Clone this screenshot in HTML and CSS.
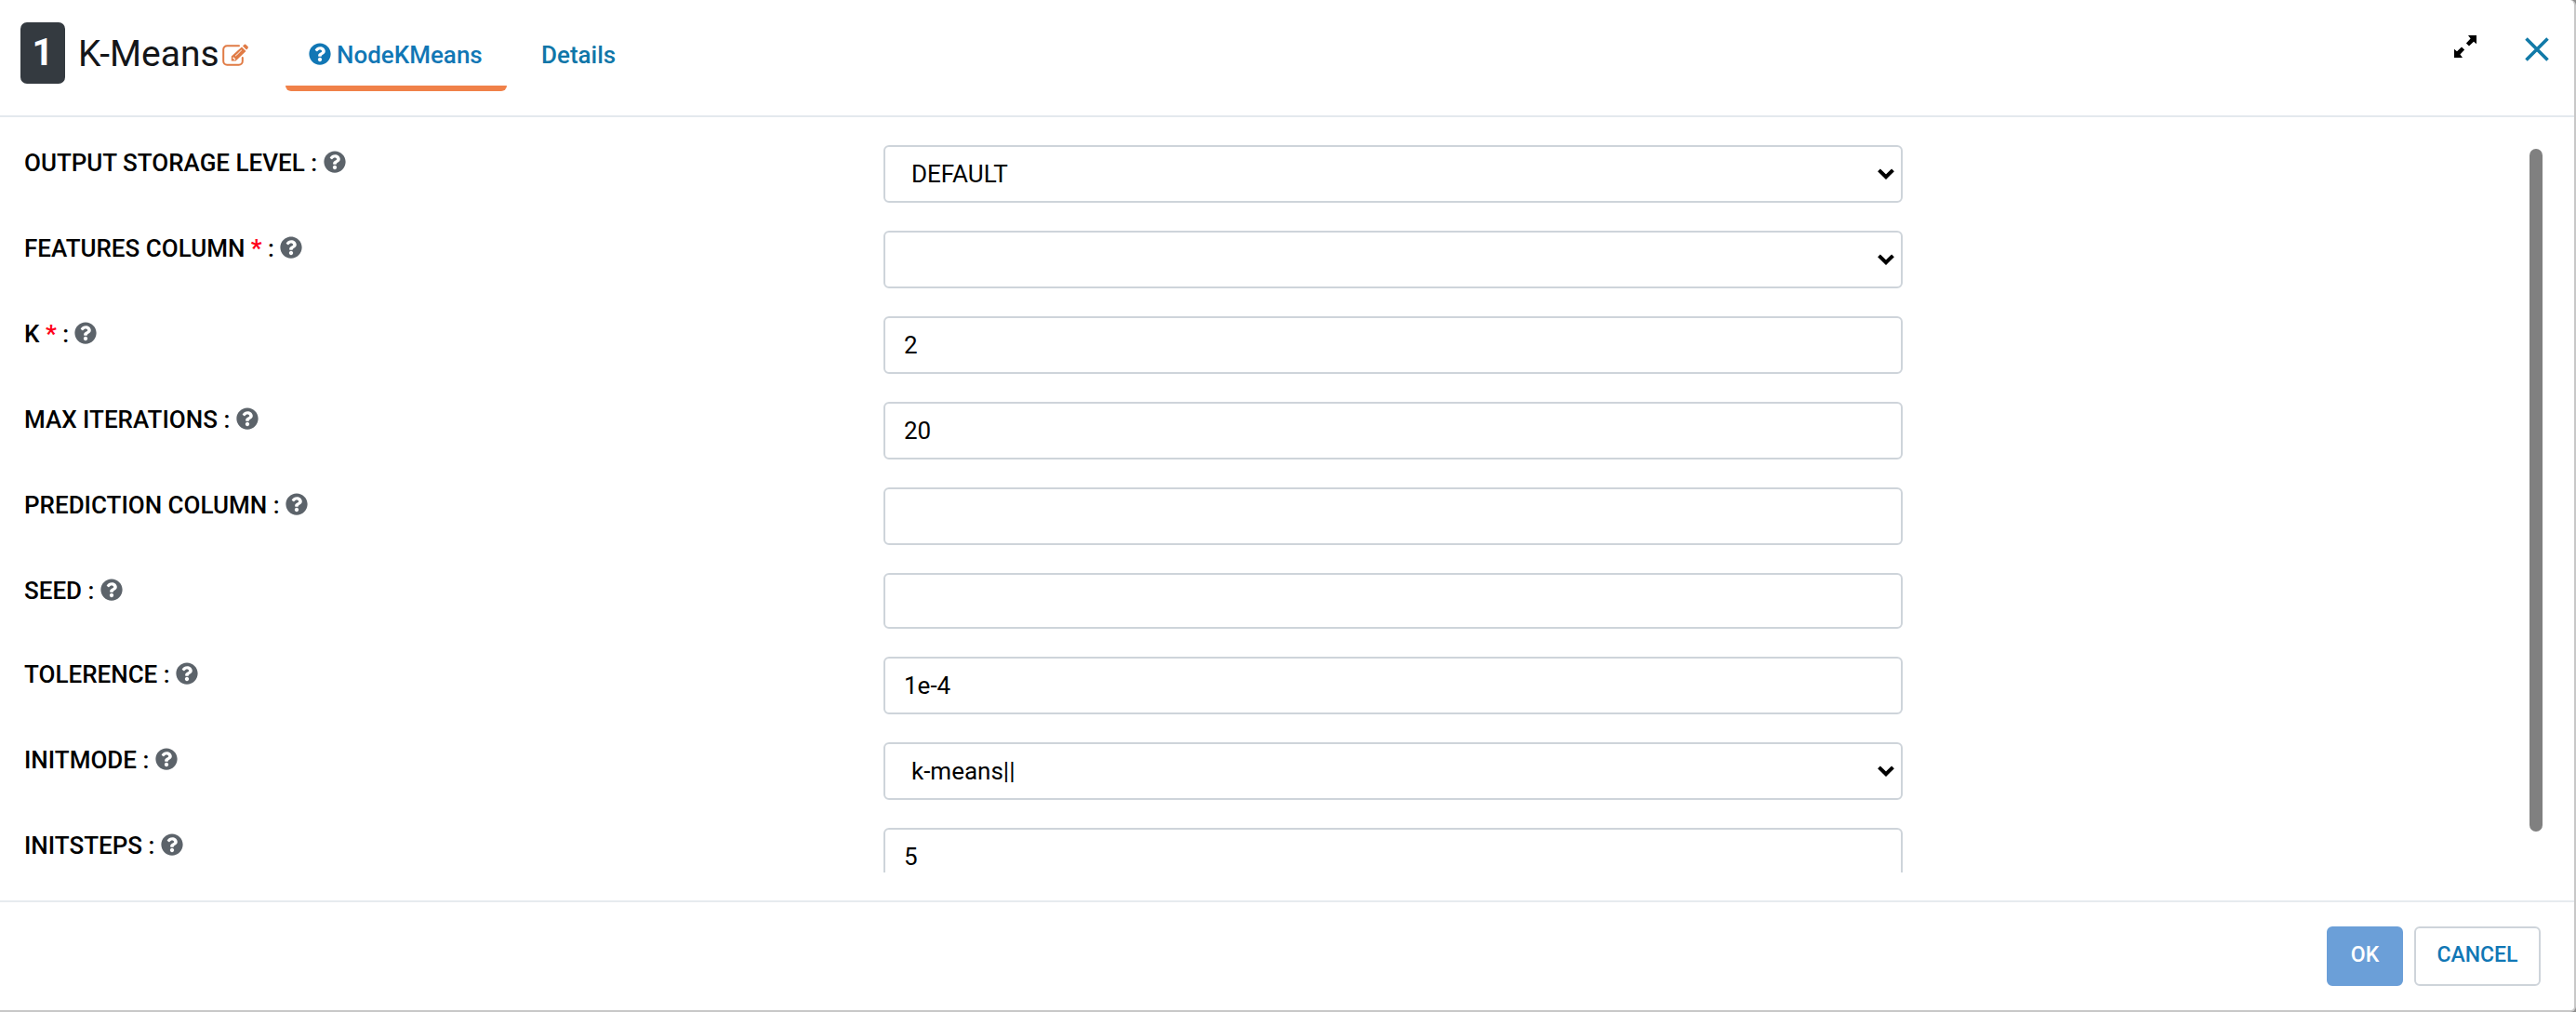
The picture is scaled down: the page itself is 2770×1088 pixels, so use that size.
FILE: index.html
```html
<!DOCTYPE html>
<html lang="en">
<head>
<meta charset="utf-8">
<title>K-Means</title>
<link rel="stylesheet" href="styles.css">
</head>
<body>
<svg class="sprite" aria-hidden="true">
  <symbol id="help" viewBox="0 0 512 512"><path fill="currentColor" d="M504 256c0 137-111 248-248 248S8 393 8 256 119 8 256 8s248 111 248 248zM262.700 90c-54.500 0-89.300 23-116.500 63.800-3.500 5.300-2.400 12.400 2.700 16.300l34.700 26.300c5.200 3.900 12.600 3 16.700-2.100 17.900-22.700 30.100-35.800 57.300-35.800 20.400 0 45.700 13.100 45.700 33 0 15-12.400 22.700-32.500 34C247.100 238.500 216 254.900 216 296v4c0 6.600 5.400 12 12 12h56c6.600 0 12-5.400 12-12v-1.300c0-28.500 83.200-29.600 83.200-106.700 0-58-60.200-102-116.500-102zM256 338c-25.400 0-46 20.600-46 46s20.600 46 46 46 46-20.600 46-46-20.600-46-46-46z"/></symbol>
</svg>
<div class="dialog">
  <header class="header">
    <span class="badge">1</span>
    <h1 class="title">K-Means</h1>
    <svg class="edit" viewBox="0 0 28 24"><path d="M18 2.200H5.200a4 4 0 0 0-4 4v12.600a4 4 0 0 0 4 4h12.600a4 4 0 0 0 4-4V15" fill="none" stroke="currentColor" stroke-width="2" stroke-linecap="round"/><path fill="currentColor" fill-rule="evenodd" d="M21 3.500l4.500 4.500L14.500 18.500H9.800v-5zM12 14.300l-.6.700v1.200h1.300v1.200h1l.7-.7zM20.500 6.500l-6.600 6.600.5.500L21 7zM22 2.500l1.300-1.300a1.700 1.700 0 0 1 2.400 0l1.600 1.600a1.700 1.700 0 0 1 0 2.400L26 6.500z"/></svg>
    <nav class="tabs">
      <a class="tab active"><svg class="help"><use href="#help"/></svg><span>NodeKMeans</span></a>
      <a class="tab">Details</a>
    </nav>
    <div class="tools">
      <svg class="expand" viewBox="0 0 24 24"><path d="M15 0H24V9.200L21 6.800L16 11.600L12.900 8.500L17.600 3.400Z"/><path d="M15 0H24V9.200L21 6.800L16 11.600L12.900 8.500L17.600 3.400Z" transform="rotate(180 12 12)"/></svg>
      <svg class="close" viewBox="0 0 26 26"><path d="M1.500 1.500l23 23M24.500 1.500l-23 23"/></svg>
    </div>
  </header>
  <main class="body">
    <div class="form">
      <div class="row"><label>OUTPUT STORAGE LEVEL : <svg class="help"><use href="#help"/></svg></label><div class="field select">DEFAULT<svg class="chev" viewBox="0 0 18 12"><path d="M1.500 1.800L9 9.200l7.500-7.400"/></svg></div></div>
      <div class="row"><label>FEATURES COLUMN <b>*</b> : <svg class="help"><use href="#help"/></svg></label><div class="field select"><svg class="chev" viewBox="0 0 18 12"><path d="M1.500 1.800L9 9.200l7.500-7.400"/></svg></div></div>
      <div class="row"><label>K <b>*</b> : <svg class="help"><use href="#help"/></svg></label><div class="field">2</div></div>
      <div class="row"><label>MAX ITERATIONS : <svg class="help"><use href="#help"/></svg></label><div class="field">20</div></div>
      <div class="row"><label>PREDICTION COLUMN : <svg class="help"><use href="#help"/></svg></label><div class="field"></div></div>
      <div class="row short"><label>SEED : <svg class="help"><use href="#help"/></svg></label><div class="field"></div></div>
      <div class="row"><label>TOLERENCE : <svg class="help"><use href="#help"/></svg></label><div class="field">1e-4</div></div>
      <div class="row"><label>INITMODE : <svg class="help"><use href="#help"/></svg></label><div class="field select">k-means||<svg class="chev" viewBox="0 0 18 12"><path d="M1.500 1.800L9 9.200l7.500-7.400"/></svg></div></div>
      <div class="row"><label>INITSTEPS : <svg class="help"><use href="#help"/></svg></label><div class="field">5</div></div>
    </div>
    <div class="scrollbar"></div>
  </main>
  <footer class="footer">
    <button class="btn primary">OK</button>
    <button class="btn">CANCEL</button>
  </footer>
</div>
</body>
</html>
```
FILE: styles.css
```css
* { box-sizing: border-box; }
body { margin: 0; background: #8c8c8c; font-family: Roboto, "Liberation Sans", sans-serif; font-size: 26px; color: #000; }
svg { display: block; flex: none; }
.sprite { width: 0; height: 0; position: absolute; }
.dialog { width: 2770px; height: 1088px; background: #fff; border: solid #c8c8c8; border-width: 0 2px 2px 0; border-radius: 0 6px 6px 0; display: flex; flex-direction: column; overflow: hidden; }
.header { height: 126px; flex: none; border-bottom: 2px solid #e4e9ee; display: flex; align-items: flex-start; padding: 24px 27px 0 22px; }
.badge { width: 48px; height: 66px; border-radius: 7px; background: #343a40; color: #fff; font-size: 40px; font-weight: 700; line-height: 66px; text-align: center; }
.title { margin: 0 0 0 14px; width: 153px; font-size: 39px; font-weight: 400; line-height: 68px; color: #141619; white-space: nowrap; }
.edit { width: 28px; height: 24px; margin: 23px 0 0 2px; color: #e07b45; }
.tabs { display: flex; margin-left: 40px; }
.tab { height: 74px; padding: 0 26px; line-height: 70px; font-weight: 500; color: #0f76a8; display: flex; border-bottom: 6px solid transparent; margin-right: 11px; }
.tab.active { width: 238px; padding-left: 25px; color: #1177b5; border-bottom-color: #f08149; border-radius: 0 0 6px 6px; }
.tab .help { margin: 22px 6px 0 0; color: #1177b5; }
.help { width: 24px; height: 24px; color: #5c636a; }
.tools { margin-left: auto; display: flex; }
.expand { width: 24px; height: 24px; margin-top: 14px; }
.close { width: 26px; height: 26px; margin: 16px 0 0 52px; stroke: #117aa8; stroke-width: 3.600; }
.body { height: 844px; flex: none; border-bottom: 2px solid #e7ebef; display: flex; justify-content: space-between; padding: 30px 34px 0 26px; }
.form { height: 782px; overflow: hidden; }
.row { display: grid; grid-template-columns: 924px 1096px; height: 92px; }
.row.short { height: 90px; }
.row label { display: flex; height: 39px; line-height: 39px; font-weight: 500; white-space: pre; }
.row label .help { margin-top: 6px; }
.row b { color: #ff0019; font-weight: 700; }
.field { height: 62px; border: 2px solid #ced4da; border-radius: 6px; padding: 0 20px; line-height: 58px; display: flex; justify-content: space-between; }
.short .field { height: 60px; }
.select { padding: 0 7px 0 28px; }
.chev { width: 18px; height: 12px; margin: 23px 0 0 auto; fill: none; stroke: #000; stroke-width: 4; }
.scrollbar { width: 14px; height: 734px; margin-top: 4px; border-radius: 7px; background: #808080; }
.footer { display: flex; justify-content: flex-end; gap: 12px; padding: 26px 36px 0 0; }
.btn { width: 136px; height: 64px; padding: 0 0 3px; border: 2px solid #ced4da; border-radius: 6px; background: #fff; color: #1177b5; font: 500 23px/1 Roboto, sans-serif; }
.btn.primary { width: 82px; background: #6b9fd8; border-color: #6b9fd8; color: #fff; }
```
